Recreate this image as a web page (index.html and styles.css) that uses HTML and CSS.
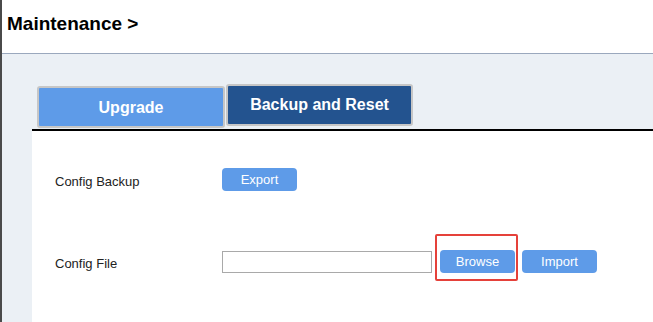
FILE: index.html
```html
<!DOCTYPE html>
<html lang="en">
  <head>
    <meta charset="UTF-8" />
    <title>Maintenance</title>
    <link rel="stylesheet" href="styles.css">
  </head>
  <body>
    <div class="page">
      <div class="header">
        <h1>Maintenance &gt;</h1>
      </div>
      <div class="main">
        <div class="tabs">
          <div class="tab tab-upgrade">Upgrade</div>
          <div class="tab tab-active">Backup and Reset</div>
        </div>
        <div class="panel">
          <div class="row row-backup">
            <span class="label">Config Backup</span>
            <button class="btn">Export</button>
          </div>
          <div class="row row-file">
            <span class="label">Config File</span>
            <input class="file-input" type="text" />
            <span class="browse-wrap">
              <button class="btn">Browse</button>
              <span class="highlight"></span>
            </span>
            <button class="btn btn-import">Import</button>
          </div>
        </div>
      </div>
    </div>
  </body>
</html>
```

FILE: styles.css
```css
/* maintenance page - backup and reset tab */
html,
body {
  height: 100%;
}
body {
  margin: 0;
  font-family: "Liberation Sans", Arial, sans-serif;
  color: #222;
  background-color: #ebf0f5;
  overflow: hidden;
}
.page {
  height: 100%;
  border-left: 2px solid #4a4a4a;
  display: flex;
  flex-direction: column;
}
.header {
  height: 53px;
  background-color: #fff;
  border-bottom: 1px solid #9aa8bd;
  box-sizing: content-box;
}
h1 {
  margin: 0;
  padding: 13px 0 0 5px;
  font-size: 19px;
  line-height: 22px;
  font-weight: bold;
  color: #000;
}
.main {
  flex: 1;
  display: flex;
  flex-direction: column;
  padding: 30px 0 0 30px;
  background-color: #ebf0f5;
}
.tabs {
  display: flex;
  align-items: flex-start;
  padding-left: 5px;
  margin-bottom: 1px;
}
.tab {
  box-sizing: border-box;
  height: 42px;
  display: flex;
  align-items: center;
  justify-content: center;
  border: 2px solid #c6c6c6;
  border-radius: 3px;
  color: #fff;
  font-size: 16px;
  font-weight: bold;
}
.tab-upgrade {
  width: 188px;
  margin-top: 2px;
  background-color: #5e9be8;
  padding-top: 1px;
}
.tab-active {
  width: 187px;
  margin-left: 1px;
  background-color: #23538f;
}
.panel {
  flex: 1;
  background-color: #fff;
  border-top: 2px solid #000;
  padding: 37px 0 0 23px;
}
.row {
  display: flex;
  align-items: center;
  height: 23px;
}
.row-file {
  margin-top: 59px;
}
.label {
  width: 167px;
  font-size: 13px;
  padding-top: 3px;
}
.btn {
  box-sizing: border-box;
  width: 75px;
  height: 23px;
  padding: 0;
  border: none;
  border-radius: 4px;
  background-color: #5e9be8;
  color: #fff;
  font-family: "Liberation Sans", Arial, sans-serif;
  font-size: 13px;
}
.file-input {
  box-sizing: border-box;
  width: 210px;
  height: 22px;
  margin: 0 8px 0 0;
  border: 1px solid #a9a9a9;
  padding: 0;
}
.browse-wrap {
  position: relative;
  display: flex;
}
.highlight {
  position: absolute;
  left: -5px;
  top: -16px;
  width: 83px;
  height: 47px;
  box-sizing: border-box;
  border: 2px solid #e5413a;
  border-radius: 2px;
}
.btn-import {
  margin-left: 7px;
}
```
